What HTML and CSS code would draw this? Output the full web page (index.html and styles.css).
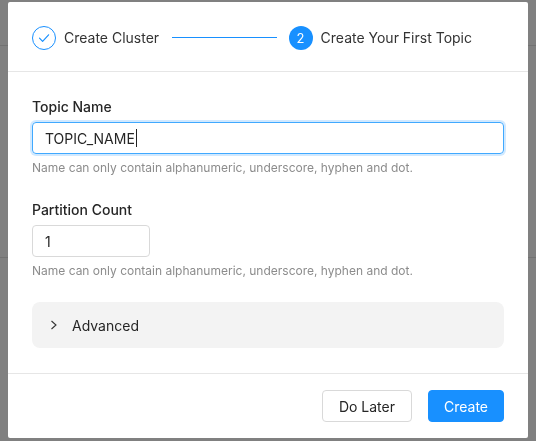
FILE: index.html
```html
<!DOCTYPE html>
<html lang="en">
<head>
<meta charset="utf-8">
<title>Create Your First Topic</title>
<link rel="stylesheet" href="styles.css">
</head>
<body>
<div class="backdrop">
  <div class="bg-header"></div>
  <div class="bg-row"></div>
</div>
<div class="modal">
  <div class="modal-header">
    <div class="steps">
      <div class="step done">
        <span class="step-icon check">
          <svg width="12" height="12" viewBox="0 0 12 12"><path d="M1.5 6.2 L4.6 9.3 L10.6 2.8" fill="none" stroke="#1890ff" stroke-width="1.2" stroke-linecap="round" stroke-linejoin="round"/></svg>
        </span>
        <span class="step-title">Create Cluster</span>
        <span class="step-line"></span>
      </div>
      <div class="step current">
        <span class="step-icon num">2</span>
        <span class="step-title">Create Your First Topic</span>
      </div>
    </div>
  </div>
  <div class="modal-body">
    <div class="field">
      <div class="label">Topic Name</div>
      <div class="input focused"><span class="value">TOPIC_NAME</span><span class="caret"></span></div>
      <div class="help">Name can only contain alphanumeric, underscore, hyphen and dot.</div>
    </div>
    <div class="field">
      <div class="label">Partition Count</div>
      <div class="input small"><span class="value">1</span></div>
      <div class="help">Name can only contain alphanumeric, underscore, hyphen and dot.</div>
    </div>
    <div class="collapse">
      <svg class="arrow" width="10" height="10" viewBox="0 0 10 10"><path d="M2.5 1 L7 5 L2.5 9" fill="none" stroke="#333" stroke-width="1.1"/></svg>
      <span class="collapse-title">Advanced</span>
    </div>
  </div>
  <div class="modal-footer">
    <button class="btn">Do Later</button>
    <button class="btn primary">Create</button>
  </div>
</div>
</body>
</html>
```

FILE: styles.css
```css
* { box-sizing: border-box; }
html, body { margin: 0; padding: 0; }
body {
  width: 536px;
  height: 441px;
  overflow: hidden;
  background: #808080;
  font-family: Inter, "Noto Sans", sans-serif;
  color: #262626;
}
.backdrop { width: 100%; }
.bg-header { height: 46px; border-bottom: 1px solid #727272; }
.bg-row { height: 212px; border-bottom: 1px solid #727272; }

.modal {
  position: fixed;
  left: 8px;
  top: 2px;
  width: 520px;
  height: 436px;
  background: #fff;
  border-radius: 2px;
  display: flex;
  flex-direction: column;
  overflow: hidden;
}
.modal-header {
  height: 70px;
  flex: none;
  border-bottom: 1px solid #e6e6e6;
  padding: 2px 56px 0 24px;
  display: flex;
  align-items: center;
}
.steps { display: flex; align-items: center; width: 100%; }
.step { display: flex; align-items: center; }
.step.done { flex: 1; }
.step.current { flex: none; padding-left: 12px; }
.step-icon {
  width: 24px; height: 24px; border-radius: 50%;
  display: flex; align-items: center; justify-content: center;
  flex: none;
}
.step-icon.check { border: 1px solid #1890ff; }
.step-icon.num { background: #1890ff; color: #fff; font-size: 13px; }
.step-title { margin-left: 8px; font-size: 14px; color: #333; white-space: nowrap; }
.step-line { flex: 1; height: 0; border-top: 1px solid #1890ff; margin-left: 13px; }

.modal-body { flex: 1; min-height: 0; padding: 24px 24px 0; }
.field { margin-bottom: 22px; }
.label { font-size: 14px; line-height: 22px; font-weight: 500; color: #262626; margin-bottom: 4px; }
.input {
  height: 32px;
  border: 1px solid #d9d9d9;
  border-radius: 4px;
  padding: 0 12px;
  display: flex;
  align-items: center;
  font-size: 14px;
  color: #262626;
}
.input.focused { border-color: #40a9ff; box-shadow: 0 0 0 2px rgba(24,144,255,0.2); }
.input.small { width: 118px; }
.caret { width: 1px; height: 18px; background: #222; margin-left: 1px; }
.help { font-size: 12px; line-height: 18px; color: #8c8c8c; margin-top: 5px; }

.collapse {
  height: 46px;
  margin-top: 1px;
  background: #f3f3f3;
  border-radius: 8px;
  display: flex;
  align-items: center;
  padding-left: 17px;
}
.arrow { flex: none; }
.collapse-title { margin-left: 13px; font-size: 14px; color: #262626; }

.modal-footer {
  flex: none;
  border-top: 1px solid #e6e6e6;
  padding: 16px 24px 16px;
  display: flex;
  justify-content: flex-end;
  gap: 16px;
}
.btn {
  height: 32px;
  padding: 0 16px;
  border: 1px solid #d9d9d9;
  border-radius: 4px;
  background: #fff;
  font-family: inherit;
  font-size: 14px;
  color: #262626;
}
.btn.primary { background: #1890ff; border-color: #1890ff; color: #fff; padding: 0 15px; }
```
